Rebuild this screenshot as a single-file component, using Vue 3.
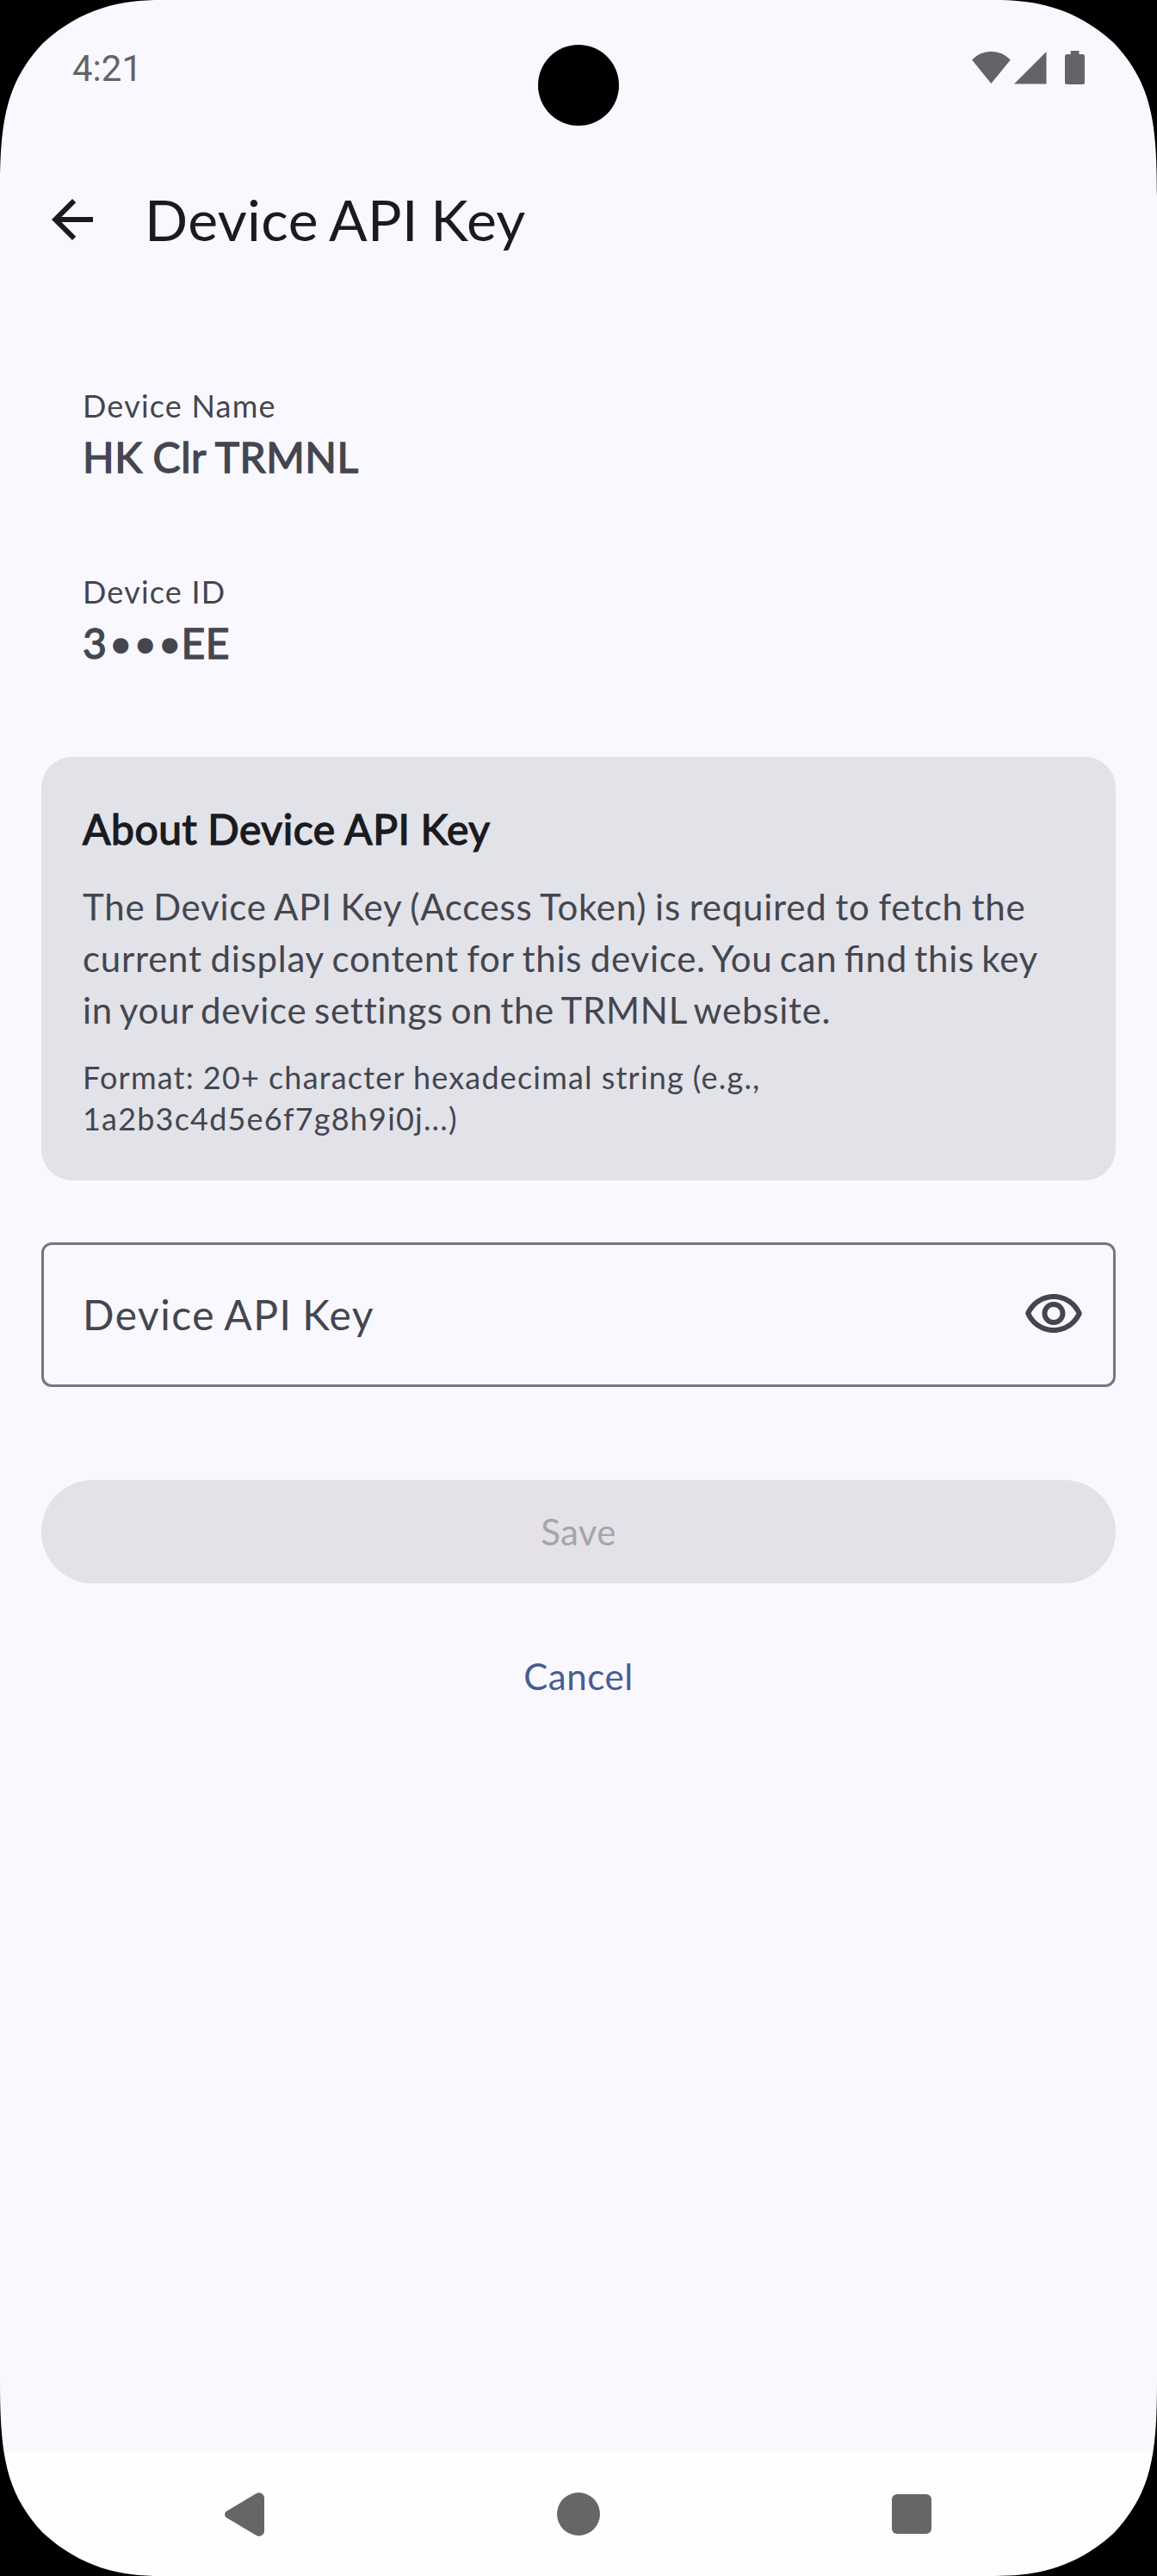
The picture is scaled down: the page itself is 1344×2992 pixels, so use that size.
<script setup>
const details = [
  { label: 'Device Name', start: 'HK Clr TRMNL', masked: '', end: '' },
  { label: 'Device ID', start: '3', masked: '●●●', end: 'EE' },
]
const corners = ['tl', 'tr', 'bl', 'br']
</script>

<template>
  <div class="screen">
    <header class="status">
      <span class="time">4:21</span>
      <svg class="status-icons" width="134" height="42" viewBox="0 0 134 42">
        <path d="M0 12.600A30.300 30.300 0 0 1 44.800 12.600L22.400 40Z" />
        <path d="M49 40.500 86.500 3V40.500Z" />
        <path d="M114.700 2h9.800v4h4a2.500 2.500 0 0 1 2.500 2.500v30a2.500 2.500 0 0 1-2.500 2.500h-18a2.500 2.500 0 0 1-2.500-2.500v-30a2.500 2.500 0 0 1 2.500-2.500h4.200z" />
      </svg>
    </header>
    <div class="camera"></div>

    <div class="appbar">
      <svg width="72" height="72" viewBox="0 0 24 24">
        <path d="M20 11H7.830l5.590-5.590L12 4l-8 8 8 8 1.410-1.410L7.830 13H20v-2z" />
      </svg>
      <h1>Device API Key</h1>
    </div>

    <main>
      <section class="details">
        <div v-for="d in details" :key="d.label" class="detail">
          <div class="label">{{ d.label }}</div>
          <div class="value">{{ d.start }}<span v-if="d.masked" class="dots">{{ d.masked }}</span>{{ d.end }}</div>
        </div>
      </section>

      <section class="card">
        <h2>About Device API Key</h2>
        <p class="body">
          <span class="line first">The Device API Key (Access Token) is required to fetch the</span>
          <span class="line second">current display content for this <span class="tight">device. You can find this key</span></span>
          <span class="line third">in your device settings on the TRMNL website.</span>
        </p>
        <p class="hint">Format: 20+ character hexadecimal string (e.g.,<br>1a2b3c4d5e6f7g8h9i0j...)</p>
      </section>

      <div class="field">
        <span>Device API Key</span>
        <svg width="72" height="72" viewBox="0 0 24 24">
          <path d="M12 6c3.790 0 7.170 2.130 8.820 5.500C19.170 14.870 15.790 17 12 17s-7.170-2.130-8.820-5.500C4.830 8.130 8.210 6 12 6m0-2C7 4 2.730 7.110 1 11.500 2.730 15.890 7 19 12 19s9.270-3.110 11-7.500C21.270 7.110 17 4 12 4zm0 5c1.380 0 2.500 1.120 2.500 2.500S13.380 14 12 14s-2.500-1.120-2.500-2.500S10.620 9 12 9m0-2c-2.480 0-4.500 2.020-4.500 4.500S9.520 16 12 16s4.500-2.020 4.500-4.500S14.480 7 12 7z" />
        </svg>
      </div>

      <button class="save" disabled>Save</button>
      <button class="cancel">Cancel</button>
    </main>

    <nav class="navbar">
      <svg width="46" height="51" viewBox="0 0 46 51">
        <path d="M2.500 21.500 36.500 1.200Q40 -.6 43 1.200T46 6.500V44.500Q46 48 43 49.800T36.500 49.800L2.500 29.500Q0 28 0 25.500T2.500 21.500Z" />
      </svg>
      <svg width="50" height="50" viewBox="0 0 50 50"><circle cx="25" cy="25" r="25" /></svg>
      <svg width="46" height="46" viewBox="0 0 46 46"><rect width="46" height="46" rx="6" /></svg>
    </nav>

    <svg v-for="c in corners" :key="c" class="corner" :class="c" width="230" height="230" viewBox="0 0 230 230">
      <path d="M0 0V228C0 145 5 98 50 50C95 9 140 0 188 0Z" />
    </svg>
  </div>
</template>

<style>
body {
  margin: 0;
}
</style>

<style scoped>
.screen {
  position: relative;
  display: flex;
  flex-direction: column;
  width: 1344px;
  height: 2992px;
  overflow: hidden;
  background: #f9f8ff;
  color: #44464f;
  font-family: Lato, sans-serif;
}
h1,
h2,
p {
  margin: 0;
}
svg {
  display: block;
  flex: none;
}
.status {
  display: flex;
  justify-content: space-between;
  height: 156px;
  box-sizing: border-box;
  padding: 57px 81px 0 84px;
  color: #646466;
  fill: #646466;
}
.time {
  font: 42px/46px Roboto, sans-serif;
}
.camera {
  position: absolute;
  left: 625px;
  top: 52px;
  width: 94px;
  height: 94px;
  border-radius: 50%;
  background: #000;
}
.appbar {
  display: flex;
  align-items: center;
  gap: 48px;
  height: 198px;
  padding-left: 48px;
  color: #1a1b20;
  fill: #1a1b20;
}
.appbar h1 {
  font-size: 66px;
  line-height: 84px;
  font-weight: 400;
  letter-spacing: 0.4px;
  word-spacing: -3px;
}
main {
  flex: 1;
  display: flex;
  flex-direction: column;
  padding: 93px 48px 0;
}
.details {
  display: flex;
  flex-direction: column;
  gap: 96px;
  padding: 0 48px 96px;
}
.label,
.hint {
  font-size: 36px;
  line-height: 48px;
  letter-spacing: 1.2px;
}
.hint {
  word-spacing: -0.5px;
}
.value,
.card h2 {
  height: 72px;
  font-size: 48px;
  line-height: 72px;
  font-weight: 400;
  letter-spacing: 0.55px;
  word-spacing: -0.8px;
  -webkit-text-stroke: 1.4px currentColor;
}
.dots {
  margin: 0 -2.6px 0 3.2px;
  font-family: "Liberation Sans", sans-serif;
  font-size: 42px;
  line-height: 1;
  letter-spacing: 3.1px;
  vertical-align: 3px;
  -webkit-text-stroke: 0;
}
.card {
  display: flex;
  flex-direction: column;
  gap: 24px;
  padding: 48px;
  border-radius: 36px;
  background: #e2e2e9;
}
.card h2 {
  color: #1a1b20;
}
.body {
  font-size: 42px;
  line-height: 60px;
  letter-spacing: 0.75px;
  white-space: nowrap;
}
.line {
  display: block;
}
.first {
  word-spacing: -1.65px;
}
.second {
  word-spacing: -1.9px;
  font-feature-settings: "liga" 1;
}
.tight {
  word-spacing: -3.2px;
}
.third {
  word-spacing: -2.8px;
}
.field {
  display: flex;
  align-items: center;
  justify-content: space-between;
  box-sizing: border-box;
  height: 168px;
  margin-top: 72px;
  padding: 0 33px 0 45px;
  border: 3px solid #757780;
  border-radius: 12px;
  fill: #44464f;
}
.field span {
  font-size: 48px;
  line-height: 72px;
  letter-spacing: 1.5px;
  word-spacing: -2.1px;
}
button {
  height: 120px;
  padding: 0;
  border: 0;
  border-radius: 60px;
  background: none;
  font: 400 42px/60px Lato, sans-serif;
  letter-spacing: 0.3px;
}
.save {
  margin-top: 108px;
  background: #e4e1e8;
  color: #a5a6aa;
}
.cancel {
  margin-top: 48px;
  color: #475d92;
  letter-spacing: 0.6px;
}
.navbar {
  display: flex;
  align-items: center;
  justify-content: space-between;
  height: 144px;
  padding: 0 262px 0 261px;
  background: #fefefe;
  fill: #666;
}
.corner {
  position: absolute;
}
.tl {
  top: 0;
  left: 0;
}
.tr {
  top: 0;
  right: 0;
  transform: scaleX(-1);
}
.bl {
  bottom: 0;
  left: 0;
  transform: scaleY(-1);
}
.br {
  bottom: 0;
  right: 0;
  transform: scale(-1);
}
</style>
